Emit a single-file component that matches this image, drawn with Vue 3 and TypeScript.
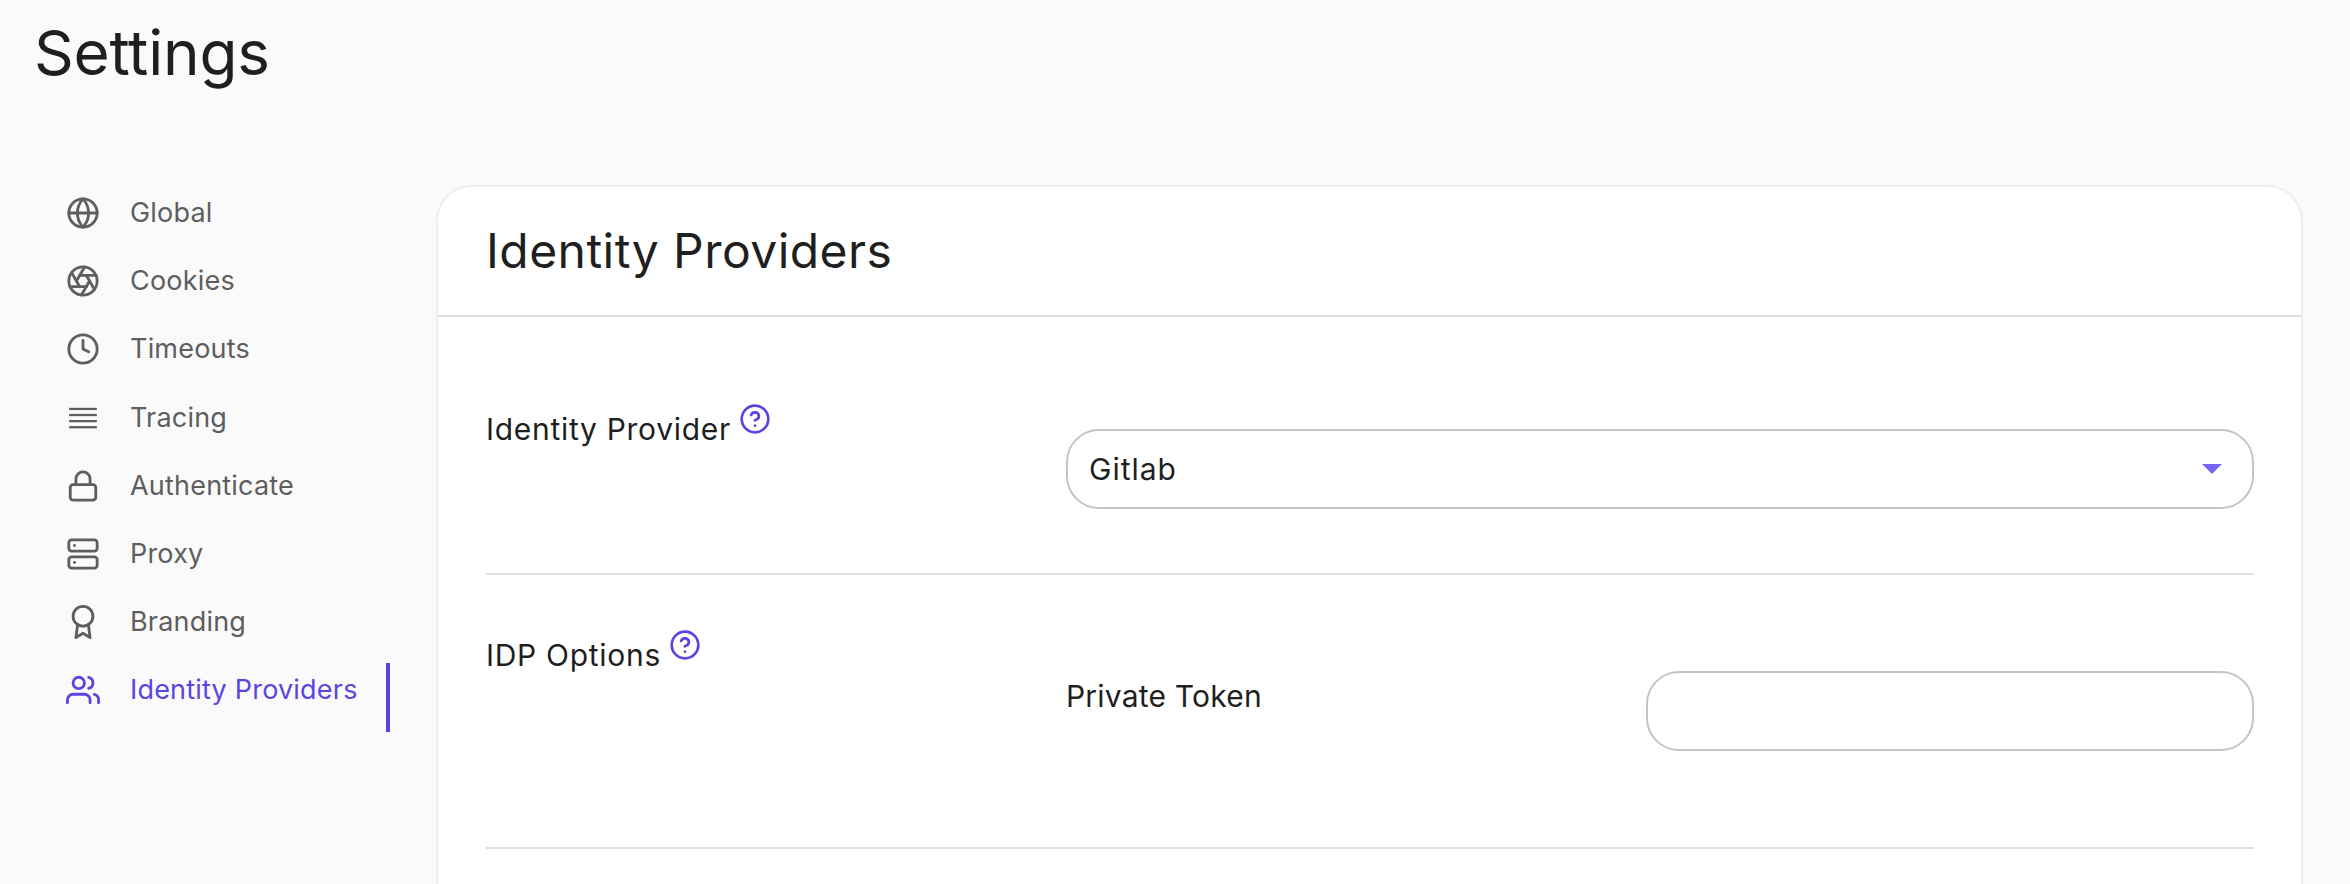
<script setup lang="ts">
interface NavItem { label: string; icon: string; active?: boolean }
const nav: NavItem[] = [
  { label: 'Global', icon: 'globe' },
  { label: 'Cookies', icon: 'aperture' },
  { label: 'Timeouts', icon: 'clock' },
  { label: 'Tracing', icon: 'lines' },
  { label: 'Authenticate', icon: 'lock' },
  { label: 'Proxy', icon: 'server' },
  { label: 'Branding', icon: 'award' },
  { label: 'Identity Providers', icon: 'users', active: true },
]
</script>

<template>
  <div class="page">
    <h1 class="title">Settings</h1>
    <div class="layout">
      <nav class="nav">
        <div v-for="item in nav" :key="item.label" class="item" :class="{ active: item.active }">
          <svg class="icon" viewBox="0 0 24 24" fill="none" stroke="currentColor" stroke-width="2" stroke-linecap="round" stroke-linejoin="round">
            <template v-if="item.icon === 'globe'">
              <circle cx="12" cy="12" r="10" />
              <line x1="2" y1="12" x2="22" y2="12" />
              <path d="M12 2a15.3 15.3 0 0 1 4 10 15.3 15.3 0 0 1-4 10 15.3 15.3 0 0 1-4-10 15.3 15.3 0 0 1 4-10z" />
            </template>
            <template v-else-if="item.icon === 'aperture'">
              <circle cx="12" cy="12" r="10" />
              <line x1="14.31" y1="8" x2="20.05" y2="17.94" />
              <line x1="9.69" y1="8" x2="21.17" y2="8" />
              <line x1="7.38" y1="12" x2="13.12" y2="2.06" />
              <line x1="9.69" y1="16" x2="3.95" y2="6.06" />
              <line x1="14.31" y1="16" x2="2.83" y2="16" />
              <line x1="16.62" y1="12" x2="10.88" y2="21.94" />
            </template>
            <template v-else-if="item.icon === 'clock'">
              <circle cx="12" cy="12" r="10" />
              <polyline points="12 6 12 12 16 14" />
            </template>
            <template v-else-if="item.icon === 'lines'">
              <g stroke-width="1.6" stroke-linecap="butt">
                <line x1="2.2" y1="5.6" x2="21.8" y2="5.6" />
                <line x1="2.2" y1="9.9" x2="21.8" y2="9.9" />
                <line x1="2.2" y1="14.2" x2="21.8" y2="14.2" />
                <line x1="2.2" y1="18.5" x2="21.8" y2="18.5" />
              </g>
            </template>
            <template v-else-if="item.icon === 'lock'">
              <rect x="3" y="11" width="18" height="11" rx="2" ry="2" />
              <path d="M7 11V7a5 5 0 0 1 10 0v4" />
            </template>
            <template v-else-if="item.icon === 'server'">
              <rect x="2" y="2" width="20" height="8" rx="2" ry="2" />
              <rect x="2" y="14" width="20" height="8" rx="2" ry="2" />
              <line x1="6" y1="6" x2="6.01" y2="6" />
              <line x1="6" y1="18" x2="6.01" y2="18" />
            </template>
            <template v-else-if="item.icon === 'award'">
              <circle cx="12" cy="8" r="7" />
              <polyline points="8.21 13.89 7 23 12 20 17 23 15.79 13.88" />
            </template>
            <template v-else>
              <path d="M17 21v-2a4 4 0 0 0-4-4H5a4 4 0 0 0-4 4v2" />
              <circle cx="9" cy="7" r="4" />
              <path d="M23 21v-2a4 4 0 0 0-3-3.87" />
              <path d="M16 3.13a4 4 0 0 1 0 7.75" />
            </template>
          </svg>
          <span class="item-label">{{ item.label }}</span>
        </div>
      </nav>

      <section class="card">
        <header class="card-head">
          <h2 class="card-title">Identity Providers</h2>
        </header>
        <div class="card-body">
          <div class="row row-provider">
            <div class="label">
              <span>Identity Provider</span>
              <svg class="help" viewBox="0 0 24 24" fill="none" stroke="currentColor" stroke-width="2" stroke-linecap="round" stroke-linejoin="round">
                <circle cx="12" cy="12" r="10" />
                <path d="M9.09 9a3 3 0 0 1 5.83 1c0 2-3 3-3 3" />
                <line x1="12" y1="17" x2="12.01" y2="17" />
              </svg>
            </div>
            <div class="select">
              <span>Gitlab</span>
              <span class="arrow"></span>
            </div>
          </div>
          <div class="row row-options">
            <div class="label">
              <span>IDP Options</span>
              <svg class="help" viewBox="0 0 24 24" fill="none" stroke="currentColor" stroke-width="2" stroke-linecap="round" stroke-linejoin="round">
                <circle cx="12" cy="12" r="10" />
                <path d="M9.09 9a3 3 0 0 1 5.83 1c0 2-3 3-3 3" />
                <line x1="12" y1="17" x2="12.01" y2="17" />
              </svg>
            </div>
            <div class="option">
              <span class="option-label">Private Token</span>
              <input class="input" type="text" />
            </div>
          </div>
        </div>
      </section>
    </div>
  </div>
</template>

<style>
html, body { margin: 0; background: #fafafa; overflow: hidden; }
</style>

<style scoped>
.page {
  width: 2350px;
  height: 884px;
  overflow: hidden;
  background: #fafafa;
  font-family: Inter, "Liberation Sans", sans-serif;
  color: #1f1f1f;
  box-sizing: border-box;
}
.title {
  margin: 0;
  padding: 15px 0 0 34px;
  font-size: 62px;
  line-height: 76px;
  height: 93px;
  font-weight: 400;
  letter-spacing: -0.2px;
  box-sizing: content-box;
}
.layout {
  display: flex;
  align-items: flex-start;
  margin-top: 78px;
}
.nav {
  width: 390px;
  flex: none;
  margin-right: 46px;
  box-sizing: border-box;
}
.item {
  height: 68.2px;
  box-sizing: border-box;
  padding: 9px 0 0 66px;
  display: flex;
  align-items: flex-start;
  color: #5e5e5e;
  font-size: 27px;
  line-height: 34px;
  letter-spacing: 0.2px;
}
.item.active {
  color: #5a45e0;
  border-right: 4px solid #5a45e0;
}
.item-label {
  margin-top: 1px;
}
.icon {
  width: 34px;
  height: 34px;
  flex: none;
  margin-right: 30px;
  margin-top: 1px;
}
.card {
  flex: none;
  width: 1867px;
  height: 800px;
  margin-top: -1px;
  box-sizing: border-box;
  background: #fff;
  border: 2px solid #eeeeee;
  border-bottom: 0;
  border-radius: 36px 36px 0 0;
}
.card-head {
  height: 128px;
  padding: 0 48px;
  border-bottom: 2px solid #e0e0e0;
  display: flex;
  align-items: center;
  box-sizing: content-box;
}
.card-title {
  margin: 0;
  font-size: 48px;
  line-height: 60px;
  font-weight: 400;
  letter-spacing: 0.45px;
}
.card-body {
  padding: 0 47px 0 48px;
}
.row {
  display: flex;
  align-items: flex-start;
  border-bottom: 2px solid #e0e0e0;
  box-sizing: border-box;
}
.row-provider { height: 258px; padding-top: 94px; }
.row-options { height: 274px; padding-top: 62px; }
.label {
  width: 580px;
  flex: none;
  display: flex;
  align-items: flex-start;
  font-size: 30px;
  line-height: 36px;
  letter-spacing: 0.7px;
}
.help {
  width: 32px;
  height: 32px;
  margin: -8px 0 0 8px;
  color: #5a45e0;
  flex: none;
}
.select {
  flex: 1;
  height: 80px;
  margin-top: 18px;
  box-sizing: border-box;
  border: 2px solid #c4c4c4;
  border-radius: 33px;
  padding: 0 30px 0 21px;
  display: flex;
  align-items: center;
  justify-content: space-between;
  font-size: 30px;
  letter-spacing: 1px;
}
.arrow {
  width: 0;
  height: 0;
  border-left: 10px solid transparent;
  border-right: 10px solid transparent;
  border-top: 10px solid #7765f5;
}
.option {
  flex: 1;
  display: flex;
  align-items: flex-start;
  margin-top: 34px;
}
.option-label {
  width: 580px;
  flex: none;
  font-size: 30px;
  line-height: 36px;
  letter-spacing: 0.2px;
  margin-top: 7px;
}
.input {
  flex: 1;
  min-width: 0;
  height: 80px;
  margin: 0;
  box-sizing: border-box;
  border: 2px solid #c4c4c4;
  border-radius: 33px;
  background: #fff;
  outline: none;
}
</style>
